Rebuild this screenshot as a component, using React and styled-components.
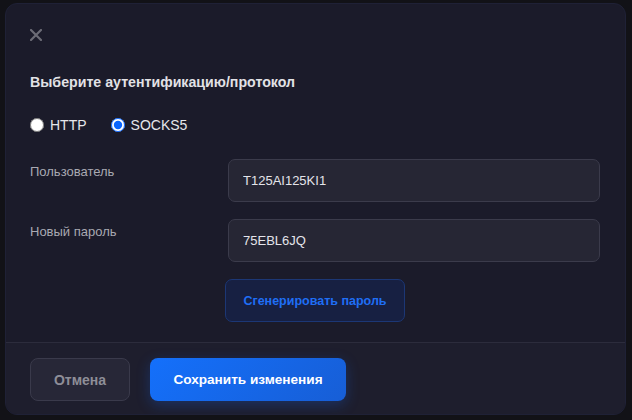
import React from "react";
import styled, { createGlobalStyle } from "styled-components";

const Global = createGlobalStyle`
  html, body { margin: 0; padding: 0; background: #121217; }
  body { font-family: "Liberation Sans", Arial, sans-serif; }
  * { box-sizing: border-box; }
`;

const Page = styled.div`
  width: 632px;
  height: 420px;
  padding: 3px 6px 5px 5px;
  background: #121217;
`;

const Modal = styled.div`
  width: 621px;
  height: 412px;
  border-radius: 12px;
  background: #1b1b2a;
  border: 1px solid #1f2136;
  overflow: hidden;
  display: flex;
  flex-direction: column;
`;

const Body = styled.div`
  flex: 1;
  padding: 24px 25px 0 24px;
  display: flex;
  flex-direction: column;
`;

const Close = styled.button`
  width: 14px;
  height: 14px;
  padding: 0;
  border: 0;
  background: none;
  display: flex;
  align-items: center;
  justify-content: center;
  margin-left: -1px;
  cursor: pointer;
`;

const Heading = styled.div`
  margin-top: 32px;
  font-size: 14.2px;
  font-weight: 700;
  color: #e2e2e6;
  line-height: 17px;
`;

const RadioRow = styled.div`
  margin-top: 26px;
  display: flex;
  align-items: center;
  gap: 24px;
`;

const RadioLabel = styled.label`
  display: flex;
  align-items: center;
  gap: 6px;
  font-size: 14px;
  line-height: 16px;
  color: #e6e6ea;
`;

const Radio = styled.input`
  margin: 0;
  width: 14px;
  height: 14px;
  accent-color: #0a66ff;
`;

const Fields = styled.div`
  margin-top: 26px;
  display: flex;
  flex-direction: column;
  gap: 17px;
`;

const FieldRow = styled.div`
  display: grid;
  grid-template-columns: 198px 372px;
  align-items: start;
`;

const Label = styled.div`
  padding-top: 5px;
  font-size: 13px;
  color: #a9a9b2;
`;

const Input = styled.input`
  height: 43px;
  width: 372px;
  border-radius: 7px;
  background: #262634;
  border: 1px solid #3b3b4b;
  padding: 0 14px;
  font-family: inherit;
  font-size: 13px;
  color: #e4e4ea;
  outline: none;
`;

const GenButton = styled.button`
  margin-top: 17px;
  margin-left: 195px;
  width: 180px;
  height: 43px;
  border-radius: 7px;
  background: #172042;
  border: 1px solid #1c3775;
  color: #1f6ef5;
  font-family: inherit;
  font-size: 12.5px;
  font-weight: 700;
  cursor: pointer;
`;

const Footer = styled.div`
  height: 72px;
  border-top: 1px solid #2c2c3c;
  background: #1e1e2d;
  display: flex;
  align-items: flex-start;
  gap: 20px;
  padding: 15px 24px 0;
`;

const Button = styled.button`
  height: 43px;
  border-radius: 8px;
  font-family: inherit;
  font-size: ${(p) => (p.$primary ? 13.6 : 14)}px;
  font-weight: 700;
  cursor: pointer;
  width: ${(p) => p.$w}px;
  ${(p) =>
    p.$primary
      ? `
    background: linear-gradient(135deg, #1470fb 0%, #175ed6 100%);
    border: 0;
    color: #ffffff;
    box-shadow: 0 4px 14px rgba(20, 100, 240, 0.28);
  `
      : `
    background: #272737;
    border: 1px solid #3a3a4b;
    color: #8e8e98;
  `}
`;

export default function App() {
  return (
    <>
      <Global />
      <Page>
        <Modal>
          <Body>
            <Close aria-label="close">
              <svg width="12" height="12" viewBox="0 0 12 12">
                <path
                  d="M1 1L11 11M11 1L1 11"
                  stroke="#6c6c76"
                  strokeWidth="2.2"
                  strokeLinecap="round"
                />
              </svg>
            </Close>
            <Heading>Выберите аутентификацию/протокол</Heading>
            <RadioRow>
              <RadioLabel>
                <Radio type="radio" name="proto" />
                HTTP
              </RadioLabel>
              <RadioLabel>
                <Radio type="radio" name="proto" defaultChecked />
                SOCKS5
              </RadioLabel>
            </RadioRow>
            <Fields>
              <FieldRow>
                <Label>Пользователь</Label>
                <Input defaultValue="T125AI125KI1" />
              </FieldRow>
              <FieldRow>
                <Label>Новый пароль</Label>
                <Input defaultValue="75EBL6JQ" />
              </FieldRow>
            </Fields>
            <GenButton>Сгенерировать пароль</GenButton>
          </Body>
          <Footer>
            <Button $w={100}>Отмена</Button>
            <Button $w={196} $primary>
              Сохранить изменения
            </Button>
          </Footer>
        </Modal>
      </Page>
    </>
  );
}
